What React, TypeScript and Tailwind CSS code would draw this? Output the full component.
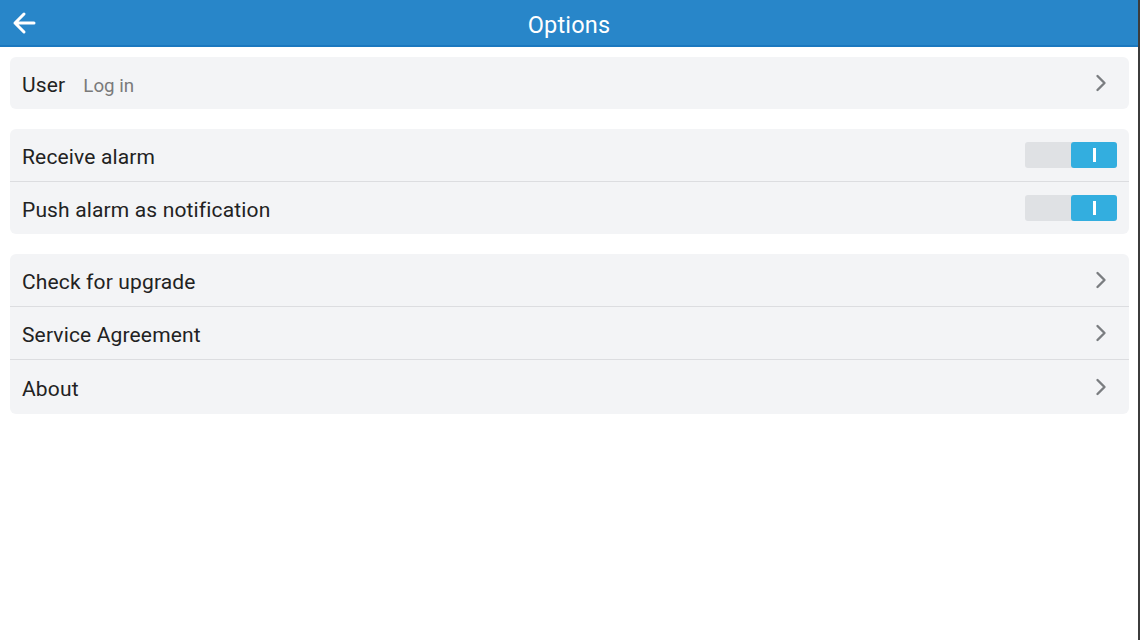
import React from "react";

function Chevron() {
  return (
    <svg width="12" height="18" viewBox="0 0 12 18" className="mr-[22px]">
      <path d="M2.5 2 L9.5 9 L2.5 16" fill="none" stroke="#7a7d80" strokeWidth="2.4" strokeLinecap="round" strokeLinejoin="round" />
    </svg>
  );
}

function Toggle() {
  return (
    <div className="mr-[12px] flex h-[26px] w-[92px] rounded-[3px] bg-[#dfe1e4]">
      <div className="ml-auto flex h-[26px] w-[46px] items-center justify-center rounded-[3px] bg-[#33aedf]">
        <div className="h-[14px] w-[3px] bg-white" />
      </div>
    </div>
  );
}

function Row({ children, right, last, tall }: { children: React.ReactNode; right: React.ReactNode; last?: boolean; tall?: boolean }) {
  const cls = last ? (tall ? "h-[54px]" : "h-[52px]") : "h-[53px] border-b border-[#dcdde0]";
  return (
    <div className={"flex items-center justify-between pl-3 " + cls}>
      <div className="flex items-baseline pt-[5px]">{children}</div>
      {right}
    </div>
  );
}

const label = "text-[21px] tracking-[0.15px] text-[#222]";

export default function App() {
  return (
    <div className="flex h-[640px] w-[1140px] bg-white" style={{ fontFamily: "Roboto, 'Noto Sans', sans-serif" }}>
      <div className="flex w-[1138px] flex-col">
        <div className="relative flex h-[47px] items-center justify-center border-b-2 border-[#1b78bf] bg-[#2886c9] pt-[6px]">
          <svg width="26" height="24" viewBox="0 0 26 24" className="absolute left-[11px] top-[11px]">
            <path d="M13 3 L4 12 L13 21 M4 12 L23 12" fill="none" stroke="white" strokeWidth="3" strokeLinecap="round" strokeLinejoin="round" />
          </svg>
          <span className="text-[23.5px] tracking-[0.2px] text-white">Options</span>
        </div>
        <div className="flex flex-col gap-5 px-[10px] pr-[9px] pt-[10px]">
          <div className="rounded-md bg-[#f3f4f6]">
            <Row right={<Chevron />} last>
              <span className={label}>User</span>
              <span className="ml-[18px] text-[18.75px] text-[#7a7a7a]">Log in</span>
            </Row>
          </div>
          <div className="rounded-md bg-[#f3f4f6]">
            <Row right={<Toggle />}>
              <span className={label}>Receive alarm</span>
            </Row>
            <Row right={<Toggle />} last>
              <span className={label}>Push alarm as notification</span>
            </Row>
          </div>
          <div className="rounded-md bg-[#f3f4f6]">
            <Row right={<Chevron />}>
              <span className={label}>Check for upgrade</span>
            </Row>
            <Row right={<Chevron />}>
              <span className={label}>Service Agreement</span>
            </Row>
            <Row right={<Chevron />} last tall>
              <span className={label}>About</span>
            </Row>
          </div>
        </div>
      </div>
      <div className="h-full w-[2px] bg-[#3c3c3c]" />
    </div>
  );
}
